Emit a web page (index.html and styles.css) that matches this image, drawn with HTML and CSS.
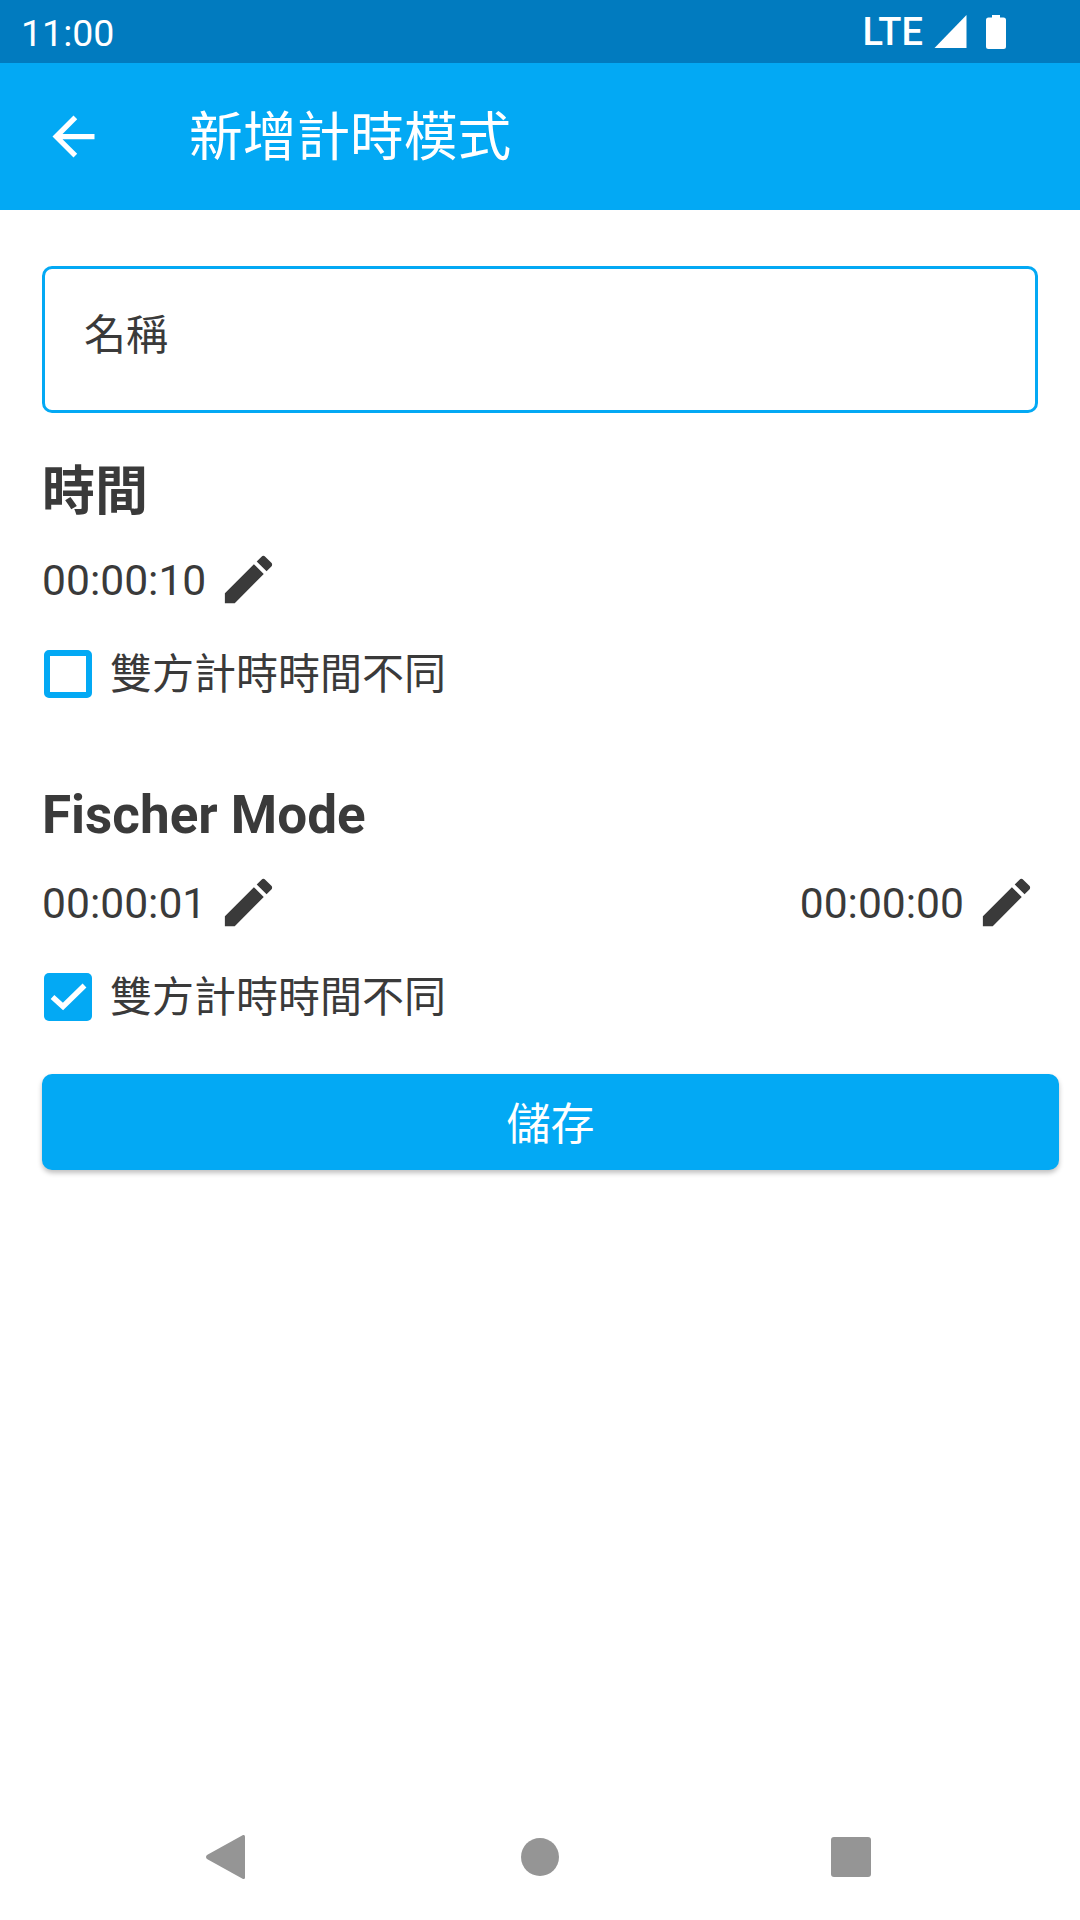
FILE: index.html
```html
<!DOCTYPE html>
<html lang="zh-Hant">
<head>
    <meta charset="UTF-8">
    <meta name="viewport" content="width=device-width, initial-scale=1.0">
    <title>新增計時模式</title>
    <link rel="stylesheet" href="styles.css">
</head>
<body>

<div class="phone">
    <!-- status bar -->
    <div class="status-bar">
        <div class="time">11:00</div>
        <div class="status-icons">
            <span class="lte">LTE</span>
            <svg class="signal" viewBox="0 0 32 33"><path d="M32 0V33H0z"/></svg>
            <svg class="battery" viewBox="0 0 20 34"><path d="M6 0h8v2.500h3.500q2.500 0 2.500 2.500v26.500q0 2.500-2.500 2.500h-15q-2.500 0-2.500-2.500V5q0-2.500 2.500-2.500H6z"/></svg>
        </div>
    </div>

    <!-- app bar -->
    <div class="app-bar">
        <svg class="back-icon" viewBox="0 0 24 24"><path d="M20 11H7.830l5.590-5.590L12 4l-8 8 8 8 1.410-1.410L7.830 13H20v-2z"/></svg>
        <div class="app-title">新增計時模式</div>
    </div>

    <!-- form -->
    <div class="content">
        <div class="name-input">名稱</div>

        <div class="section-title">時間</div>
        <div class="time-row">
            <div class="time-item">
                <span>00:00:10</span>
                <svg class="edit-icon" viewBox="0 0 24 24"><path d="M3 17.250V21h3.750L17.810 9.940l-3.750-3.750L3 17.250zM20.710 7.040c.39-.39.39-1.020 0-1.410l-2.340-2.340c-.39-.39-1.020-.39-1.410 0l-1.830 1.830 3.750 3.750 1.830-1.830z"/></svg>
            </div>
        </div>
        <div class="check-row">
            <span class="checkbox"></span>
            <span>雙方計時時間不同</span>
        </div>

        <div class="section-title fischer">Fischer Mode</div>
        <div class="time-row">
            <div class="time-item">
                <span>00:00:01</span>
                <svg class="edit-icon" viewBox="0 0 24 24"><path d="M3 17.250V21h3.750L17.810 9.940l-3.750-3.750L3 17.250zM20.710 7.040c.39-.39.39-1.020 0-1.410l-2.340-2.340c-.39-.39-1.020-.39-1.410 0l-1.830 1.830 3.750 3.750 1.830-1.830z"/></svg>
            </div>
            <div class="time-item">
                <span>00:00:00</span>
                <svg class="edit-icon" viewBox="0 0 24 24"><path d="M3 17.250V21h3.750L17.810 9.940l-3.750-3.750L3 17.250zM20.710 7.040c.39-.39.39-1.020 0-1.410l-2.340-2.340c-.39-.39-1.020-.39-1.410 0l-1.830 1.830 3.750 3.750 1.830-1.830z"/></svg>
            </div>
        </div>
        <div class="check-row">
            <span class="checkbox checked">
                <svg viewBox="0 0 48 48"><path d="M8.500 24L19 33.500 40.500 12.500" fill="none" stroke="#fff" stroke-width="5.500"/></svg>
            </span>
            <span>雙方計時時間不同</span>
        </div>

        <button type="button" class="save-btn">儲存</button>
    </div>

    <!-- navigation bar -->
    <div class="nav-bar">
        <svg class="nav-back" viewBox="0 0 40 46"><path d="M38 0.500q2-.5 2 1.500v42q0 2-2 1.500L1 25q-2-2 0-4z"/></svg>
        <span class="nav-home"></span>
        <span class="nav-recent"></span>
    </div>
</div>

</body>
</html>
```

FILE: styles.css
```css
:root {
    --primary-color: #03a9f4;
    --dark-primary: #017bbf;
    --text-color: #3a3a3a;
    --nav-color: #959595;
}

body {
    margin: 0;
    font-family: Roboto, "Noto Sans CJK TC", sans-serif;
    background-color: #fff;
    color: var(--text-color);
}

.phone {
    position: relative;
    width: 1080px;
    height: 1920px;
    overflow: hidden;
    background-color: #fff;
}

.status-bar {
    height: 63px;
    display: flex;
    justify-content: space-between;
    align-items: center;
    padding: 0 74px 0 21px;
    background-color: var(--dark-primary);
    color: #fff;
    box-sizing: border-box;
}

.time {
    padding-top: 4px;
    font-size: 37.500px;
    line-height: 59px;
}

.status-icons {
    display: flex;
    align-items: center;
}

.lte {
    font-size: 38px;
    font-weight: 500;
    margin-right: 11px;
}

.signal {
    width: 33px;
    height: 33px;
    fill: #fff;
    margin-right: 19px;
}

.battery {
    width: 20px;
    height: 34px;
    fill: #fff;
}

.app-bar {
    display: flex;
    align-items: center;
    height: 147px;
    padding-left: 42px;
    background-color: var(--primary-color);
    color: #fff;
}

.back-icon {
    width: 63px;
    height: 63px;
    fill: #fff;
    margin-right: 84px;
}

.app-title {
    padding-bottom: 8px;
    font-size: 53.700px;
}

.content {
    padding: 56px 21px 0 42px;
}

.name-input {
    width: 996px;
    height: 147px;
    box-sizing: border-box;
    padding: 36px 39px;
    border: 3px solid var(--primary-color);
    border-radius: 10px;
    font-size: 42px;
    line-height: 62px;
}

.section-title {
    margin-top: 41px;
    font-size: 53px;
    font-weight: 700;
    line-height: 76px;
}

.section-title.fischer {
    margin-top: 71px;
}

.time-row {
    display: flex;
    justify-content: space-between;
    width: 996px;
    margin-top: 19px;
}

.time-item {
    display: flex;
    align-items: center;
    gap: 11px;
    font-size: 42.600px;
    line-height: 63px;
}

.edit-icon {
    width: 63px;
    height: 63px;
    margin-top: -3px;
    fill: var(--text-color);
}

.check-row {
    display: flex;
    align-items: center;
    gap: 18px;
    margin-top: 32px;
    font-size: 42px;
    line-height: 62px;
}

.checkbox {
    display: block;
    width: 48px;
    height: 48px;
    margin: 0 0 3px 2px;
    box-sizing: border-box;
    border: 6px solid var(--primary-color);
    border-radius: 5px;
}

.checkbox.checked {
    border: 0;
    background-color: var(--primary-color);
}

.checkbox svg {
    display: block;
    width: 48px;
    height: 48px;
}

.save-btn {
    display: block;
    width: 1017px;
    height: 96px;
    margin-top: 45px;
    padding: 0 0 2px;
    border: 0;
    border-radius: 10px;
    background-color: var(--primary-color);
    color: #fff;
    font-family: inherit;
    font-size: 44px;
    box-shadow: 0 3px 5px rgba(0, 0, 0, 0.25);
}

.nav-bar {
    position: absolute;
    left: 0;
    right: 0;
    bottom: 0;
    height: 126px;
    padding-right: 3px;
    display: flex;
    align-items: center;
    justify-content: center;
}

.nav-back {
    width: 39px;
    height: 46px;
    fill: var(--nav-color);
    margin-right: 276px;
}

.nav-home {
    width: 38px;
    height: 38px;
    border-radius: 50%;
    background-color: var(--nav-color);
    margin-right: 272px;
}

.nav-recent {
    width: 40px;
    height: 40px;
    border-radius: 3px;
    background-color: var(--nav-color);
}
```
